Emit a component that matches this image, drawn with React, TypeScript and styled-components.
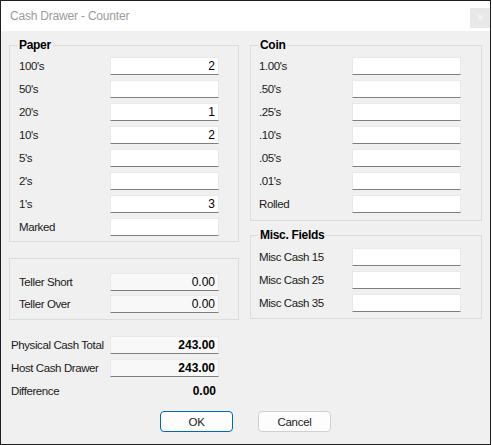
import React from "react";
import styled, { createGlobalStyle } from "styled-components";

const GlobalStyle = createGlobalStyle`
  html, body {
    margin: 0;
    padding: 0;
    background: #ffffff;
  }
  body {
    font-family: "Liberation Sans", Arial, sans-serif;
    font-size: 11.5px;
    letter-spacing: -0.4px;
    color: #1a1a1a;
  }
`;

const Window = styled.div`
  box-sizing: border-box;
  width: 491px;
  height: 445px;
  border: 1px solid #1f1f1f;
  background: #f0f0f0;
  display: flex;
  flex-direction: column;
`;

const TitleBar = styled.div`
  height: 30px;
  background: #ffffff;
  display: flex;
  align-items: flex-start;
  justify-content: space-between;
  padding-left: 9px;
`;

const Title = styled.div`
  line-height: 30px;
  font-size: 12px;
  letter-spacing: -0.2px;
  color: #9b9b9b;
`;

const CloseButton = styled.div`
  width: 20px;
  height: 20px;
  margin-top: 7px;
  background: #e8e8e8;
  color: #f8f8f8;
  font-size: 13px;
  line-height: 20px;
  text-align: center;
`;

const Body = styled.div`
  flex: 1;
  padding: 14px 8px 0 8px;
  display: flex;
  flex-direction: column;
`;

const Columns = styled.div`
  display: grid;
  grid-template-columns: 230px 232px;
  column-gap: 11px;
  align-items: start;
`;

const Column = styled.div<{ $gap: number }>`
  display: flex;
  flex-direction: column;
  gap: ${(p) => p.$gap}px;
`;

const Group = styled.div<{ $pt: number; $pb: number; $pl: number }>`
  position: relative;
  border: 1px solid #dcdcdc;
  padding: ${(p) => p.$pt}px 0 ${(p) => p.$pb}px ${(p) => p.$pl}px;
  display: flex;
  flex-direction: column;
`;

const Legend = styled.div`
  position: absolute;
  top: -9px;
  left: 7px;
  padding: 0 2px;
  height: 16px;
  line-height: 16px;
  background: #f0f0f0;
  font-size: 12px;
  letter-spacing: -0.3px;
  font-weight: bold;
  color: #000000;
`;

const Rows = styled.div<{ $gap: number }>`
  display: flex;
  flex-direction: column;
  gap: ${(p) => p.$gap}px;
`;

const Row = styled.div<{ $labelWidth: number }>`
  display: grid;
  grid-template-columns: ${(p) => p.$labelWidth}px 109px;
  align-items: center;
  height: 18px;
`;

const Label = styled.span`
  white-space: nowrap;
  color: #1a1a1a;
`;

const Field = styled.input<{ $readonly?: boolean; $bold?: boolean }>`
  box-sizing: border-box;
  width: 109px;
  height: 18px;
  margin: 0;
  padding: 0 3px 0 3px;
  border: 1px solid #e9e9e9;
  border-bottom: 1px solid #7f7f7f;
  background: ${(p) => (p.$readonly ? "#f8f8f8" : "#ffffff")};
  font-family: "Liberation Sans", Arial, sans-serif;
  font-size: 12px;
  letter-spacing: 0;
  font-weight: ${(p) => (p.$bold ? "bold" : "normal")};
  color: #000000;
  text-align: right;
  outline: none;
`;

const Totals = styled.div`
  margin-top: 16px;
  padding-left: 2px;
  display: flex;
  flex-direction: column;
  gap: 5px;
`;

const PlainValue = styled.span`
  width: 109px;
  box-sizing: border-box;
  padding-right: 3px;
  text-align: right;
  font-size: 12px;
  letter-spacing: 0;
  font-weight: bold;
  color: #000000;
`;

const Buttons = styled.div`
  margin-top: 11px;
  display: flex;
  justify-content: center;
  gap: 25px;
`;

const Button = styled.button<{ $primary?: boolean }>`
  box-sizing: border-box;
  width: 73px;
  height: 21px;
  margin: 0;
  padding: 0;
  border: 1px solid ${(p) => (p.$primary ? "#0067c0" : "#d0d0d0")};
  border-radius: 4px;
  background: #fdfdfd;
  font-family: "Liberation Sans", Arial, sans-serif;
  font-size: 11.5px;
  letter-spacing: -0.3px;
  color: #1a1a1a;
`;

type Entry = { label: string; value?: string };

const paper: Entry[] = [
  { label: "100's", value: "2" },
  { label: "50's" },
  { label: "20's", value: "1" },
  { label: "10's", value: "2" },
  { label: "5's" },
  { label: "2's" },
  { label: "1's", value: "3" },
  { label: "Marked" },
];

const coin: Entry[] = [
  { label: "1.00's" },
  { label: ".50's" },
  { label: ".25's" },
  { label: ".10's" },
  { label: ".05's" },
  { label: ".01's" },
  { label: "Rolled" },
];

const misc: Entry[] = [
  { label: "Misc Cash 15" },
  { label: "Misc Cash 25" },
  { label: "Misc Cash 35" },
];

const teller: Entry[] = [
  { label: "Teller Short", value: "0.00" },
  { label: "Teller Over", value: "0.00" },
];

const FieldRows = ({
  items,
  labelWidth,
  gap = 5,
  readonly,
}: {
  items: Entry[];
  labelWidth: number;
  gap?: number;
  readonly?: boolean;
}) => (
  <Rows $gap={gap}>
    {items.map((it) => (
      <Row key={it.label} $labelWidth={labelWidth}>
        <Label>{it.label}</Label>
        <Field $readonly={readonly} readOnly defaultValue={it.value ?? ""} />
      </Row>
    ))}
  </Rows>
);

export default function App() {
  return (
    <>
      <GlobalStyle />
      <Window>
        <TitleBar>
          <Title>Cash Drawer - Counter</Title>
          <CloseButton>×</CloseButton>
        </TitleBar>
        <Body>
          <Columns>
            <Column $gap={16}>
              <Group $pt={11} $pb={5} $pl={9}>
                <Legend>Paper</Legend>
                <FieldRows items={paper} labelWidth={91} />
              </Group>
              <Group $pt={14} $pb={6} $pl={9}>
                <FieldRows items={teller} labelWidth={91} gap={4} readonly />
              </Group>
            </Column>
            <Column $gap={14}>
              <Group $pt={11} $pb={7} $pl={8}>
                <Legend>Coin</Legend>
                <FieldRows items={coin} labelWidth={93} />
              </Group>
              <Group $pt={12} $pb={6} $pl={8}>
                <Legend>Misc. Fields</Legend>
                <FieldRows items={misc} labelWidth={93} />
              </Group>
            </Column>
          </Columns>
          <Totals>
            <Row $labelWidth={99}>
              <Label>Physical Cash Total</Label>
              <Field $readonly $bold readOnly defaultValue="243.00" />
            </Row>
            <Row $labelWidth={99}>
              <Label>Host Cash Drawer</Label>
              <Field $readonly $bold readOnly defaultValue="243.00" />
            </Row>
            <Row $labelWidth={99}>
              <Label>Difference</Label>
              <PlainValue>0.00</PlainValue>
            </Row>
          </Totals>
          <Buttons>
            <Button $primary>OK</Button>
            <Button>Cancel</Button>
          </Buttons>
        </Body>
      </Window>
    </>
  );
}
